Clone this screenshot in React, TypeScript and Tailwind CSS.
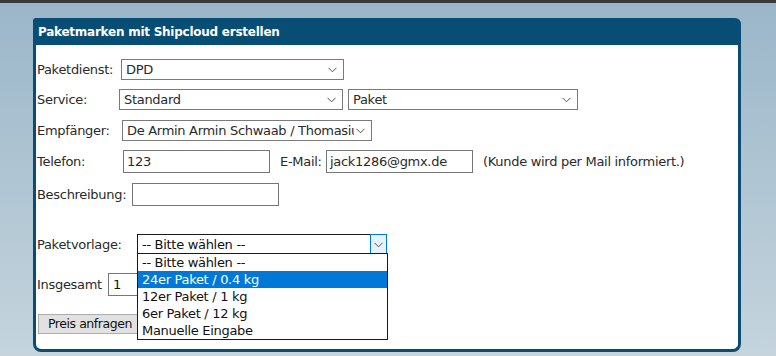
import React from 'react';

const Chevron = ({ className = '' }: { className?: string }) => (
  <svg width="9" height="6" viewBox="0 0 9 6" className={className}>
    <path d="M0.5 0.8 L4.5 4.8 L8.5 0.8" fill="none" stroke="#505050" strokeWidth="1" />
  </svg>
);

function FakeSelect({ value, width, className = '' }: { value: string; width: string; className?: string }) {
  return (
    <div className={`${width} h-[21px] border border-[#7a7a7a] bg-white flex items-center justify-between pl-[4px] pr-[6px] overflow-hidden ${className}`}>
      <span className="whitespace-nowrap overflow-hidden">{value}</span>
      <Chevron className="shrink-0 ml-[2px]" />
    </div>
  );
}

function TextInput({ value = '', width }: { value?: string; width: string }) {
  return (
    <div className={`${width} h-[23px] border border-[#767676] bg-white flex items-center pl-[3px] whitespace-nowrap overflow-hidden`}>
      {value}
    </div>
  );
}

const options = ['-- Bitte wählen --', '24er Paket / 0.4 kg', '12er Paket / 1 kg', '6er Paket / 12 kg', 'Manuelle Eingabe'];

export default function App() {
  return (
    <div
      className="w-[776px] h-[356px] overflow-hidden bg-gradient-to-b from-[#9ab6c9] to-[#c5d4dd] text-[13px] tracking-[-0.3px] text-[#2a2a2a]"
      style={{ fontFamily: '"DejaVu Sans", Verdana, sans-serif' }}
    >
      <div className="h-[3px] bg-[#3a3a3a]" />
      <div className="ml-[33px] mt-[15px] w-[708px]">
        {/* Header */}
        <div className="h-[27px] bg-[#084d74] rounded-tl-[3px] rounded-tr-[6px] flex items-center pl-[5px]">
          <span className="text-white font-bold text-[12px] tracking-[-0.25px]">Paketmarken mit Shipcloud erstellen</span>
        </div>

        {/* Body */}
        <div className="h-[307px] bg-white border-x-[3px] border-b-[3px] border-[#0a4d74] rounded-b-[8px] pl-[1px] pt-[14px] relative">
          <div className="flex items-center">
            <span className="w-[84px]">Paketdienst:</span>
            <FakeSelect value="DPD" width="w-[223px]" />
          </div>

          <div className="flex items-center mt-[9px]">
            <span className="w-[82px]">Service:</span>
            <FakeSelect value="Standard" width="w-[224px]" />
            <FakeSelect value="Paket" width="w-[230px]" className="ml-[5px]" />
          </div>

          <div className="flex items-center mt-[10px]">
            <span className="w-[85px]">Empfänger:</span>
            <FakeSelect value="De Armin Armin Schwaab / Thomasiuss" width="w-[250px]" />
          </div>

          <div className="flex items-center mt-[9px]">
            <span className="w-[86px]">Telefon:</span>
            <TextInput value="123" width="w-[147px]" />
            <span className="ml-[10px] w-[46px]">E-Mail:</span>
            <TextInput value="jack1286@gmx.de" width="w-[147px]" />
            <span className="ml-[10px]">(Kunde wird per Mail informiert.)</span>
          </div>

          <div className="flex items-center mt-[10px]">
            <span className="w-[95px]">Beschreibung:</span>
            <TextInput width="w-[147px]" />
          </div>

          <div className="flex items-center mt-[28px]">
            <span className="w-[100px]">Paketvorlage:</span>
            <div className="w-[250px] h-[22px] border border-[#1a1a1a] bg-white flex items-stretch">
              <span className="flex-1 flex items-center pl-[4px] text-[#111]">-- Bitte wählen --</span>
              <span className="w-[17px] -my-px -mr-px border border-[#0078d7] bg-[#e5f1fb] flex items-center justify-center">
                <Chevron />
              </span>
            </div>
          </div>

          <div className="flex items-center mt-[17px]">
            <span className="w-[71px]">Insgesamt</span>
            <div className="w-[40px] h-[23px] border border-[#767676] bg-white flex items-center pl-[4px] text-[#111]">1</div>
          </div>

          <div className="mt-[18px] ml-[1px]">
            <div className="w-[110px] h-[20px] bg-[#e1e1e1] border border-[#adadad] flex items-center pl-[9px] text-[#111] text-[12.5px] tracking-[-0.45px] whitespace-nowrap">
              Preis anfragen
            </div>
          </div>

          {/* Open dropdown list */}
          <div className="absolute left-[101px] top-[208px] w-[251px] border border-[#1a1a1a] bg-white text-[#111]">
            {options.map((o, i) => (
              <div
                key={o}
                className={`h-[17px] flex items-center pl-[4px] whitespace-nowrap ${i === 1 ? 'bg-[#0078d7] text-white' : ''}`}
              >
                {o}
              </div>
            ))}
          </div>
        </div>
      </div>
    </div>
  );
}
